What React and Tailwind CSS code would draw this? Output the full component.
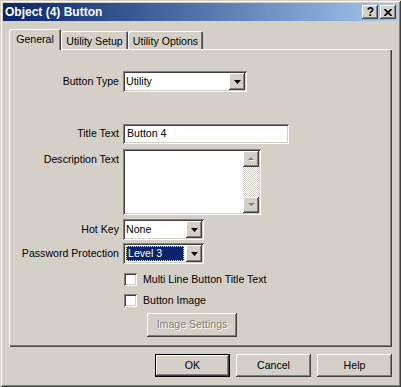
import React from "react";

const raised =
  "shadow-[inset_-1px_-1px_#404040,inset_1px_1px_#ffffff,inset_-2px_-2px_#808080,inset_2px_2px_#d4d0c8]";
const sunken =
  "shadow-[inset_1px_1px_#808080,inset_-1px_-1px_#ffffff,inset_2px_2px_#404040,inset_-2px_-2px_#d4d0c8]";

const Arrow = ({ up = false, disabled = false }) => (
  <svg width="9" height="6" viewBox="0 0 9 6">
    {disabled && (
      <polygon points={up ? "2,5 5,2 8,5" : "2,2 8,2 5,5"} fill="#ffffff" />
    )}
    <polygon
      points={up ? "1,4 4,1 7,4" : "1,1 8,1 4.5,4.5"}
      fill={disabled ? "#808080" : "#000000"}
    />
  </svg>
);

const DropButton = () => (
  <div className={`w-[16px] h-full bg-[#d4d0c8] ${raised} flex items-center justify-center`}>
    <svg width="7" height="4" viewBox="0 0 7 4">
      <polygon points="0,0 7,0 3.5,4" fill="#000" />
    </svg>
  </div>
);

const Combo = ({ value, width, focused = false }) => (
  <div className={`flex h-[21px] ${width} bg-white p-[2px] ${sunken}`}>
    {focused ? (
      <div className="flex-1 flex p-[1px] pr-[2px]">
        <div className="flex-1 flex items-center bg-[#0a246a] text-white border border-dotted border-[#f4e8a6] pl-[1px]">
          {value}
        </div>
      </div>
    ) : (
      <div className="flex-1 flex items-center pl-[1px]">{value}</div>
    )}
    <DropButton />
  </div>
);

const Label = ({ children, top = false }) => (
  <div className={`w-[111px] text-right pr-[1px] ${top ? "pt-[3px]" : "self-center"}`}>
    {children}
  </div>
);

const Checkbox = ({ label, className }) => (
  <div className={`flex items-center ml-[115px] ${className}`}>
    <div className={`w-[13px] h-[13px] bg-white ${sunken}`} />
    <span className="ml-[6px] leading-[13px]">{label}</span>
  </div>
);

const DlgButton = ({ children, isDefault = false }) =>
  isDefault ? (
    <div className="w-[75px] h-[23px] border border-black">
      <div className={`w-full h-full flex items-center justify-center ${raised}`}>{children}</div>
    </div>
  ) : (
    <div className={`w-[75px] h-[23px] flex items-center justify-center ${raised}`}>{children}</div>
  );

export default function App() {
  return (
    <div
      className="w-[401px] h-[387px] bg-[#d4d0c8] p-[3px] flex flex-col text-[10.6px] text-black font-['Liberation_Sans',Arial,sans-serif] shadow-[inset_1px_1px_#d4d0c8,inset_-1px_-1px_#404040,inset_2px_2px_#ffffff,inset_-2px_-2px_#808080]"
    >
      {/* title bar */}
      <div className="h-[18px] flex items-center bg-linear-to-r from-[#0a246a] to-[#a6caf0] pl-[2px] pr-[2px]">
        <span className="text-white font-bold text-[12px] leading-none">Object (4) Button</span>
        <div className="ml-auto flex gap-[2px]">
          <div className={`w-[16px] h-[14px] bg-[#d4d0c8] ${raised} flex items-center justify-center`}>
            <span className="font-bold text-[12px] leading-none pl-[1px]">?</span>
          </div>
          <div className={`w-[16px] h-[14px] bg-[#d4d0c8] ${raised} flex items-center justify-center`}>
            <svg width="8" height="7" viewBox="0 0 8 7">
              <path d="M0.5 0 L7.5 7 M7.5 0 L0.5 7" stroke="#000" strokeWidth="1.6" />
            </svg>
          </div>
        </div>
      </div>

      {/* tabs */}
      <div className="mt-[8px] ml-[6px] h-[20px] flex items-start">
        <div className="relative z-10 w-[52px] h-[21px] bg-[#d4d0c8] rounded-t-[2px] shadow-[inset_1px_1px_#ffffff,inset_-1px_0_#404040,inset_-2px_0_#808080] flex justify-center pt-[3px]">
          General
        </div>
        <div className="mt-[2px] w-[67px] h-[18px] rounded-t-[2px] shadow-[inset_1px_1px_#ffffff,inset_-1px_0_#404040,inset_-2px_0_#808080] flex justify-center pt-[3px]">
          Utility Setup
        </div>
        <div className="mt-[2px] w-[75px] h-[18px] rounded-t-[2px] shadow-[inset_1px_1px_#ffffff,inset_-1px_0_#404040,inset_-2px_0_#808080] flex justify-center pt-[3px]">
          Utility Options
        </div>
      </div>

      {/* panel */}
      <div className="ml-[6px] w-[383px] h-[298px] flex flex-col shadow-[inset_1px_1px_#ffffff,inset_-1px_-1px_#404040,inset_-2px_-2px_#808080]">
        <div className="mt-[22px] flex gap-[3px]">
          <Label>Button Type</Label>
          <Combo value="Utility" width="w-[124px]" />
        </div>

        <div className="mt-[32px] flex gap-[3px]">
          <Label>Title Text</Label>
          <div className={`w-[166px] h-[20px] bg-white ${sunken} flex items-center pl-[4px]`}>Button 4</div>
        </div>

        <div className="mt-[5px] flex gap-[3px]">
          <Label top>Description Text</Label>
          <div className={`w-[138px] h-[66px] bg-white ${sunken} p-[2px] flex justify-end`}>
            <div className="w-[16px] h-full flex flex-col">
              <div className={`h-[16px] bg-[#d4d0c8] ${raised} flex items-center justify-center`}>
                <Arrow up disabled />
              </div>
              <div className="flex-1 bg-[repeating-conic-gradient(#ffffff_0%_25%,#d4d0c8_0%_50%)] bg-[length:2px_2px]" />
              <div className={`h-[16px] bg-[#d4d0c8] ${raised} flex items-center justify-center`}>
                <Arrow disabled />
              </div>
            </div>
          </div>
        </div>

        <div className="mt-[4px] flex gap-[3px]">
          <Label>Hot Key</Label>
          <Combo value="None" width="w-[81px]" />
        </div>

        <div className="mt-[3px] flex gap-[3px]">
          <Label>Password Protection</Label>
          <Combo value="Level 3" width="w-[81px]" focused />
        </div>

        <Checkbox label="Multi Line Button Title Text" className="mt-[9px]" />
        <Checkbox label="Button Image" className="mt-[8px]" />

        <div
          className={`mt-[6px] ml-[138px] w-[90px] h-[24px] ${raised} flex items-center justify-center text-[#808080] [text-shadow:1px_1px_0_#ffffff]`}
        >
          Image Settings
        </div>
      </div>

      {/* dialog buttons */}
      <div className="mt-[7px] flex justify-end gap-[6px] pr-[6px]">
        <DlgButton isDefault>OK</DlgButton>
        <DlgButton>Cancel</DlgButton>
        <DlgButton>Help</DlgButton>
      </div>
    </div>
  );
}
